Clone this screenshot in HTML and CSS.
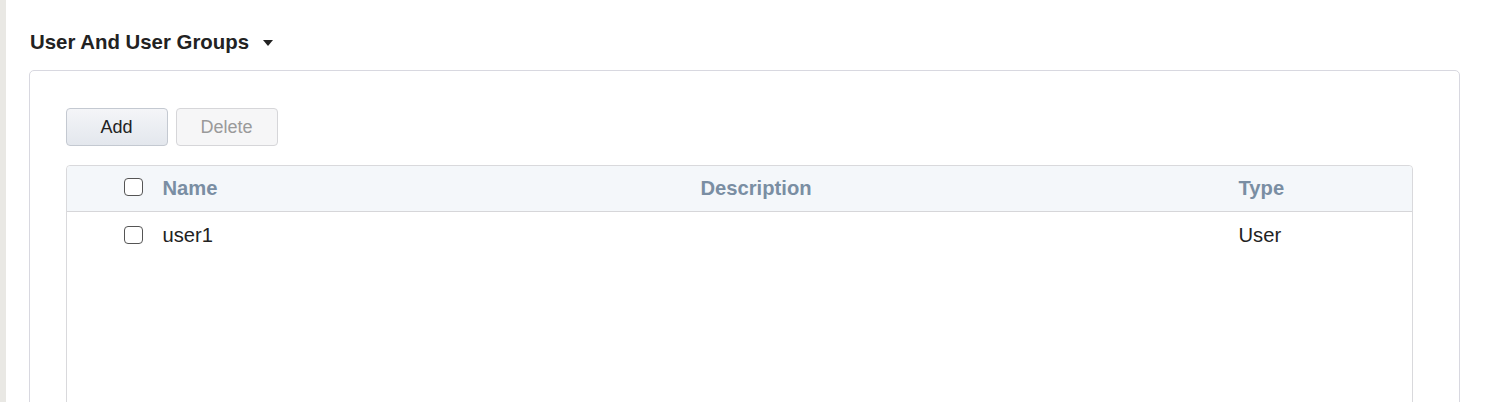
FILE: index.html
```html
<!DOCTYPE html>
<html>
<head>
<meta charset="utf-8">
<link rel="stylesheet" href="styles.css">
</head>
<body>
<div class="page">
  <div class="strip"></div>
  <div class="main">
    <div class="section-title">User And User Groups <span class="caret"></span></div>
    <div class="panel">
      <div class="toolbar">
        <button class="btn btn-primary">Add</button>
        <button class="btn btn-disabled">Delete</button>
      </div>
      <div class="table">
        <div class="row head">
          <span class="check"></span>
          <span class="col name">Name</span>
          <span class="col desc">Description</span>
          <span class="col type">Type</span>
        </div>
        <div class="row">
          <span class="check"></span>
          <span class="col name">user1</span>
          <span class="col desc"></span>
          <span class="col type">User</span>
        </div>
      </div>
    </div>
  </div>
</div>
</body>
</html>
```
FILE: styles.css
```css
html, body {
  margin: 0;
  padding: 0;
  background: #fff;
  font-family: "Liberation Sans", Arial, sans-serif;
  color: #222;
  height: 402px;
  overflow: hidden;
}
.page {
  display: flex;
  height: 402px;
}
.strip {
  width: 6px;
  flex: none;
  background: #e9e8e4;
}
.main {
  flex: 1;
  padding: 29px 40px 0 23px;
}
.section-title {
  font-size: 20.4px;
  font-weight: bold;
  line-height: 26px;
  color: #222;
  display: flex;
  align-items: center;
  padding-left: 1px;
}
.caret {
  display: inline-block;
  width: 0;
  height: 0;
  margin-left: 14px;
  margin-top: 1px;
  border-left: 5.5px solid transparent;
  border-right: 5.5px solid transparent;
  border-top: 6px solid #222;
}
.panel {
  margin-top: 15px;
  border: 1.5px solid #d8d8e0;
  border-radius: 5px;
  padding: 37px 46px 0 35.5px;
  height: 400px;
}
.toolbar {
  display: flex;
  gap: 8px;
}
.btn {
  width: 102px;
  height: 38px;
  border-radius: 4px;
  font-family: "Liberation Sans", Arial, sans-serif;
  font-size: 18px;
  padding: 0;
}
.btn-primary {
  background: linear-gradient(#f4f5f8, #e3e7ed);
  border: 1px solid #c4c9d1;
  color: #222;
}
.btn-disabled {
  background: #f6f6f7;
  border: 1px solid #d6d6d9;
  color: #9a9a9a;
}
.table {
  margin-top: 19px;
  border: 1.5px solid #d9d9dc;
  border-radius: 4px;
  height: 300px;
}
.row {
  display: grid;
  grid-template-columns: 19px 558px 538px 1fr;
  align-items: center;
  padding-left: 57px;
  font-size: 20.2px;
}
.row .check {
  border: 1.4px solid #555;
  border-radius: 4px;
  box-sizing: border-box;
  width: 19px;
  height: 18px;
  background: #fff;
}
.row .name {
  padding-left: 20px;
}
.head {
  height: 44.5px;
  background: #f4f7fa;
  border-bottom: 1.5px solid #d6d6d9;
  border-radius: 4px 4px 0 0;
  font-weight: bold;
  color: #7a8ea3;
}
.head .check {
  margin-top: -2px;
}
.row:not(.head) {
  height: 48px;
}
.row:not(.head) .check {
  margin-top: -2px;
}
```
